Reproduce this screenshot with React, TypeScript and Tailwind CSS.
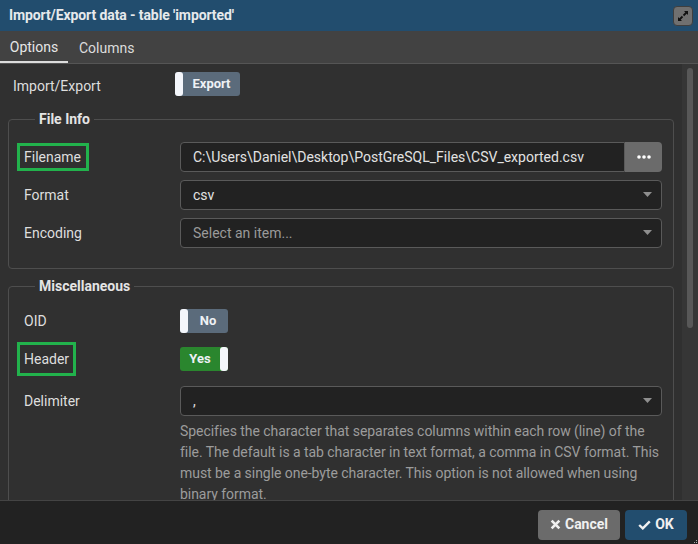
import React from 'react';

const font = { fontFamily: 'Roboto, "Liberation Sans", sans-serif' };

function Toggle({ label, on, width }: { label: string; on: boolean; width: string }) {
  return (
    <div
      className={`flex h-6 ${width} items-stretch rounded-[3px] ${on ? 'bg-[#2a862e]' : 'bg-[#5b6b7b]'}`}
    >
      {!on && <div className="w-2 rounded-[3px] bg-[#f4f6fb]" />}
      <div className="flex flex-1 items-center justify-center text-[13px] font-bold text-[#eef1f5]">{label}</div>
      {on && <div className="w-2 rounded-[3px] bg-[#f4f6fb]" />}
    </div>
  );
}

function Caret() {
  return (
    <svg width="9" height="6" viewBox="0 0 9 6" className="mr-[5px]">
      <path d="M0 0 L9 0 L4.5 5 Z" fill="#8f8f8f" />
    </svg>
  );
}

function Select({ value, placeholder }: { value?: string; placeholder?: string }) {
  return (
    <div className="flex h-[30px] items-center justify-between rounded-[4px] border border-[#5a5a5a] bg-[#222222] pl-3 pr-1">
      {value ? (
        <span className="text-[14px] text-[#e2e2e2]">{value}</span>
      ) : (
        <span className="text-[14px] text-[#9a9a9a]">{placeholder}</span>
      )}
      <Caret />
    </div>
  );
}

function Row({ label, children, box }: { label: string; children: React.ReactNode; box?: string }) {
  return (
    <div className="grid grid-cols-[156px_1fr] items-center">
      <div className="relative text-[14px] text-[#dedede]">
        <span className="relative">
          {label}
          {box && <span className={`absolute border-[3px] border-[#22b24c] ${box}`} />}
        </span>
      </div>
      <div>{children}</div>
    </div>
  );
}

export default function App() {
  return (
    <div style={font} className="flex h-[544px] w-[698px] flex-col overflow-hidden bg-[#303030]">
      <div className="flex h-[31px] shrink-0 items-center justify-between bg-[#224d6e] pl-[9px] pr-[5px]">
        <span className="text-[14px] font-bold tracking-[-0.1px] text-[#e6e9ec]">Import/Export data - table 'imported'</span>
        <div className="flex h-5 w-5 items-center justify-center rounded-[4px] border border-[#3f3f3f] bg-[#707070]">
          <svg width="12" height="12" viewBox="0 0 12 12">
            <path d="M7 1 L11 1 L11 5 Z" fill="#111" />
            <path d="M9.5 2.5 L6.5 5.5" stroke="#111" strokeWidth="1.8" />
            <path d="M1 7 L1 11 L5 11 Z" fill="#111" />
            <path d="M2.5 9.5 L5.5 6.5" stroke="#111" strokeWidth="1.8" />
          </svg>
        </div>
      </div>

      <div className="flex h-[33px] shrink-0 items-stretch border-b border-[#555555] bg-[#424242]">
        <div className="flex w-[68px] items-center justify-center border-b-[2px] border-[#dcdcdc] pt-[2px] text-[14px] text-[#e6e6e6]">
          Options
        </div>
        <div className="flex items-center px-[11px] pt-[2px] text-[14px] text-[#dcdcdc]">Columns</div>
      </div>

      <div className="flex min-h-0 flex-1">
        <div className="flex-1 overflow-hidden px-2 pt-[7px]">
          <div className="grid grid-cols-[162px_1fr] items-center pl-[5px]">
            <span className="pt-[5px] text-[14px] text-[#dedede]">Import/Export</span>
            <Toggle label="Export" on={false} width="w-[65px]" />
          </div>

          <fieldset className="mt-[12px] rounded-[4px] border border-[#4e4e4e] pb-[20px] pl-[15px] pr-[11px]">
            <legend className="ml-[11px] px-1 text-[14px] font-bold text-[#e4e4e4]">File Info</legend>
            <div className="mt-[12px] flex flex-col gap-2">
              <Row label="Filename" box="-left-[7px] -right-[8px] -top-[6px] -bottom-[6px]">
                <div className="flex h-[30px]">
                  <div className="flex flex-1 items-center rounded-l-[4px] border border-[#5a5a5a] bg-[#222222] pl-3 text-[14px] text-[#e2e2e2]">
                    C:\Users\Daniel\Desktop\PostGreSQL_Files\CSV_exported.csv
                  </div>
                  <div className="flex w-[37px] items-center justify-center rounded-r-[4px] bg-[#6b6b6b]">
                    <svg width="14" height="4" viewBox="0 0 14 4">
                      <circle cx="2" cy="2" r="1.8" fill="#fff" />
                      <circle cx="7" cy="2" r="1.8" fill="#fff" />
                      <circle cx="12" cy="2" r="1.8" fill="#fff" />
                    </svg>
                  </div>
                </div>
              </Row>
              <Row label="Format">
                <Select value="csv" />
              </Row>
              <Row label="Encoding">
                <Select placeholder="Select an item..." />
              </Row>
            </div>
          </fieldset>

          <fieldset className="mt-[7px] rounded-[4px] border border-[#4e4e4e] pl-[15px] pr-[11px]">
            <legend className="ml-[11px] px-1 text-[14px] font-bold text-[#e4e4e4]">Miscellaneous</legend>
            <div className="mt-[12px] flex flex-col gap-[14px]">
              <Row label="OID">
                <Toggle label="No" on={false} width="w-12" />
              </Row>
              <Row label="Header" box="-left-[7px] -right-[7px] -top-[9px] -bottom-[9px]">
                <Toggle label="Yes" on={true} width="w-12" />
              </Row>
              <div className="pt-px">
                <Row label="Delimiter">
                  <Select value="," />
                </Row>
                <div className="grid grid-cols-[156px_1fr]">
                  <div />
                  <p className="-mr-[8px] pt-[5px] text-[14px] leading-[21px] tracking-[-0.05px] text-[#9c9c9c]">
                    Specifies the character that separates columns within each row (line) of the file. The default is a
                    tab character in text format, a comma in CSV format. This must be a single one-byte character. This
                    option is not allowed when using binary format.
                  </p>
                </div>
              </div>
            </div>
          </fieldset>
        </div>
        <div className="flex w-4 shrink-0 justify-center bg-[#363636] pt-1">
          <div className="h-[260px] w-1.5 rounded-full bg-[#585858]" />
        </div>
      </div>

      <div className="relative flex h-[44px] shrink-0 items-center justify-end gap-[5px] border-t border-[#444444] bg-[#222222] pr-[11px] pt-1">
        <button className="flex h-[30px] w-[82px] items-center justify-center gap-1 rounded-[4px] bg-[#6b6b6b] text-[14px] font-bold text-[#f0f0f0]">
          <svg width="11" height="11" viewBox="0 0 10 10">
            <path d="M1.5 1.5 L8.5 8.5 M8.5 1.5 L1.5 8.5" stroke="#f0f0f0" strokeWidth="2.4" />
          </svg>
          Cancel
        </button>
        <button className="flex h-[30px] w-[62px] items-center justify-center gap-1 rounded-[4px] bg-[#224d6e] text-[14px] font-bold text-[#f0f0f0]">
          <svg width="13" height="10" viewBox="0 0 13 10">
            <path d="M1.2 5 L4.8 8.4 L11.8 1.4" stroke="#f0f0f0" strokeWidth="2.4" fill="none" />
          </svg>
          OK
        </button>
        <svg width="4" height="4" viewBox="0 0 4 4" className="absolute bottom-0 right-0">
          <rect x="2" y="0" width="1" height="1" fill="#aaa" />
          <rect x="0" y="2" width="1" height="1" fill="#aaa" />
          <rect x="2" y="2" width="1" height="1" fill="#aaa" />
        </svg>
      </div>
    </div>
  );
}
